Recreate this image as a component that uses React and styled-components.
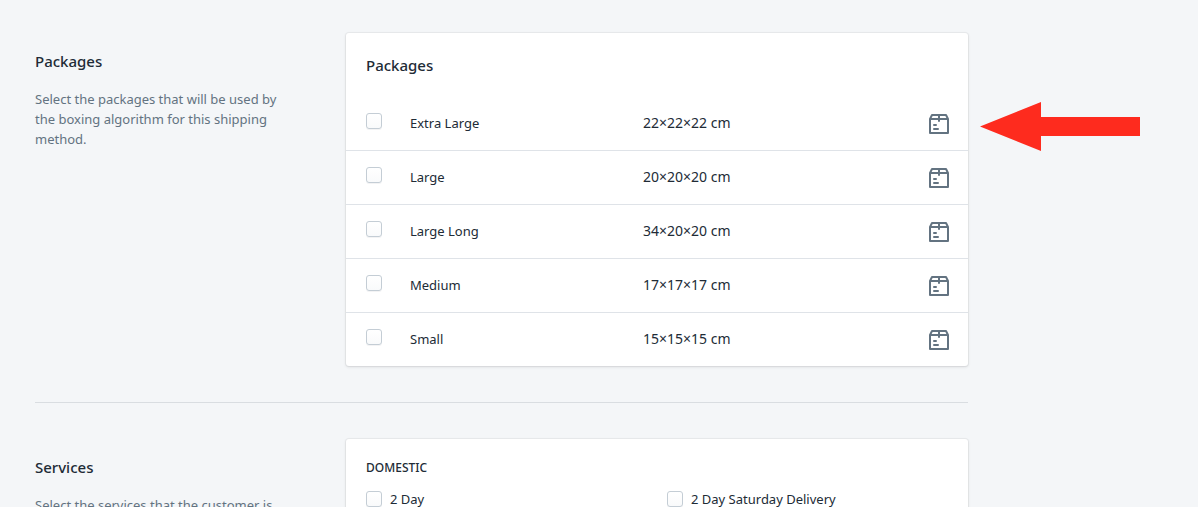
import React, { useId } from "react";
import styled, { createGlobalStyle } from "styled-components";

const GlobalStyle = createGlobalStyle`
  *, *::before, *::after { box-sizing: border-box; }
  body {
    margin: 0;
    background: #f4f6f8;
    color: #212b36;
    font-family: "Segoe UI", "Noto Sans", "Open Sans", sans-serif;
    font-size: 13px;
    line-height: 20px;
  }
  h2, h3, p { margin: 0; }
`;

const Page = styled.main`
  max-width: 968px;
  padding: 33px 0 0 35px;
`;

const Section = styled.section`
  position: relative;
  display: grid;
  grid-template-columns: 1fr 2fr;

  & + & {
    margin-top: 36px;
    padding-top: 36px;
    border-top: 1px solid #d9dde1;
  }
`;

const Annotation = styled.div`
  padding: 16px 56px 0 0;
`;

const Title = styled.h2`
  font-size: 15px;
  line-height: 24px;
  font-weight: 500;
`;

const Description = styled.p`
  margin-top: 16px;
  color: #637381;
`;

const Card = styled.div`
  background: #fff;
  border-radius: 3px;
  box-shadow: 0 0 0 1px rgba(63, 63, 68, 0.05), 0 1px 3px rgba(63, 63, 68, 0.15);
`;

const CardHeader = styled.header`
  padding: 20px;
`;

const PackageTable = styled.table`
  width: 100%;
  table-layout: fixed;
  border-collapse: separate;
  border-spacing: 0;
`;

const Cell = styled.td`
  width: ${(p) => p.$width || "auto"};
  height: 54px;
  padding: ${(p) => p.$pad || "0 0 2px"};
  border-bottom: 1px solid #dfe3e8;
  font-size: ${(p) => p.$size || "13px"};
  vertical-align: middle;
`;

const Row = styled.tr`
  &:last-child ${Cell} {
    height: 53px;
    border-bottom: 0;
  }
`;

const Checkbox = styled.input.attrs({ type: "checkbox" })`
  appearance: none;
  display: block;
  flex: none;
  width: 16px;
  height: 16px;
  margin: 0;
  border: 1px solid #c4cdd5;
  border-radius: 3px;
  background: linear-gradient(#fff, #f9fafb);
  box-shadow: 0 1px 0 rgba(22, 29, 37, 0.05);

  &:checked { background: #5c6ac4; }
`;

const ServicesBody = styled.div`
  padding: 20px 20px 0;
`;

const Subheading = styled.h3`
  font-size: 12px;
  line-height: 18px;
  font-weight: 500;
  text-transform: uppercase;
`;

const ServiceGrid = styled.div`
  display: grid;
  grid-template-columns: 1fr 1fr;
  column-gap: 20px;
  margin-top: 12px;
`;

const Choice = styled.label`
  display: flex;
  align-items: center;
  gap: 8px;
`;

const Icon = styled.svg`
  display: block;
  width: 20px;
  height: 20px;
  margin-left: auto;
`;

const Arrow = styled.svg`
  position: absolute;
  top: 69px;
  left: calc(100% + 11px);
  width: 162px;
  height: 50px;
`;

const PACKAGES = [
  ["Extra Large", "22×22×22 cm"],
  ["Large", "20×20×20 cm"],
  ["Large Long", "34×20×20 cm"],
  ["Medium", "17×17×17 cm"],
  ["Small", "15×15×15 cm"],
];

function PackageIcon() {
  return (
    <Icon viewBox="0 0 20 20" fill="#637381" aria-hidden="true">
      <path d="M19.901 4.581c-.004-.009-.002-.019-.006-.028l-2-4A1 1 0 0 0 17 0H3a1 1 0 0 0-.895.553l-2 4c-.004.009-.002.019-.006.028A.982.982 0 0 0 0 5v14a1 1 0 0 0 1 1h18a1 1 0 0 0 1-1V5a.982.982 0 0 0-.099-.419zM2 18V6h7v1a1 1 0 0 0 2 0V6h7v12H2zM3.618 2H9v2H2.618l1-2zM17.382 4H11V2h5.382l1 2zM9 14H5a1 1 0 0 0 0 2h4a1 1 0 0 0 0-2m-4-2h2a1 1 0 0 0 0-2H5a1 1 0 0 0 0 2" />
    </Icon>
  );
}

function PackageRow({ name, size }) {
  const id = useId();
  return (
    <Row>
      <Cell $width="64px" $pad="0 0 6px 20px">
        <Checkbox id={id} />
      </Cell>
      <Cell>
        <label htmlFor={id}>{name}</label>
      </Cell>
      <Cell $size="14px">{size}</Cell>
      <Cell $width="92px" $pad="1px 19px 0 0">
        <PackageIcon />
      </Cell>
    </Row>
  );
}

export default function App() {
  return (
    <>
      <GlobalStyle />
      <Page>
        <Section>
          <Annotation>
            <Title>Packages</Title>
            <Description>
              Select the packages that will be used by the boxing algorithm for this shipping method.
            </Description>
          </Annotation>
          <Card>
            <CardHeader>
              <Title>Packages</Title>
            </CardHeader>
            <PackageTable>
              <tbody>
                {PACKAGES.map(([name, size]) => (
                  <PackageRow key={name} name={name} size={size} />
                ))}
              </tbody>
            </PackageTable>
          </Card>
          <Arrow viewBox="0 0 162 50" aria-hidden="true">
            <path d="M1 24.500 62 0v15h99v19H62v15z" fill="#fe2b1e" />
          </Arrow>
        </Section>
        <Section>
          <Annotation>
            <Title>Services</Title>
            <Description>Select the services that the customer is</Description>
          </Annotation>
          <Card>
            <ServicesBody>
              <Subheading>Domestic</Subheading>
              <ServiceGrid>
                <Choice>
                  <Checkbox />
                  2 Day
                </Choice>
                <Choice>
                  <Checkbox />
                  2 Day Saturday Delivery
                </Choice>
              </ServiceGrid>
            </ServicesBody>
          </Card>
        </Section>
      </Page>
    </>
  );
}
